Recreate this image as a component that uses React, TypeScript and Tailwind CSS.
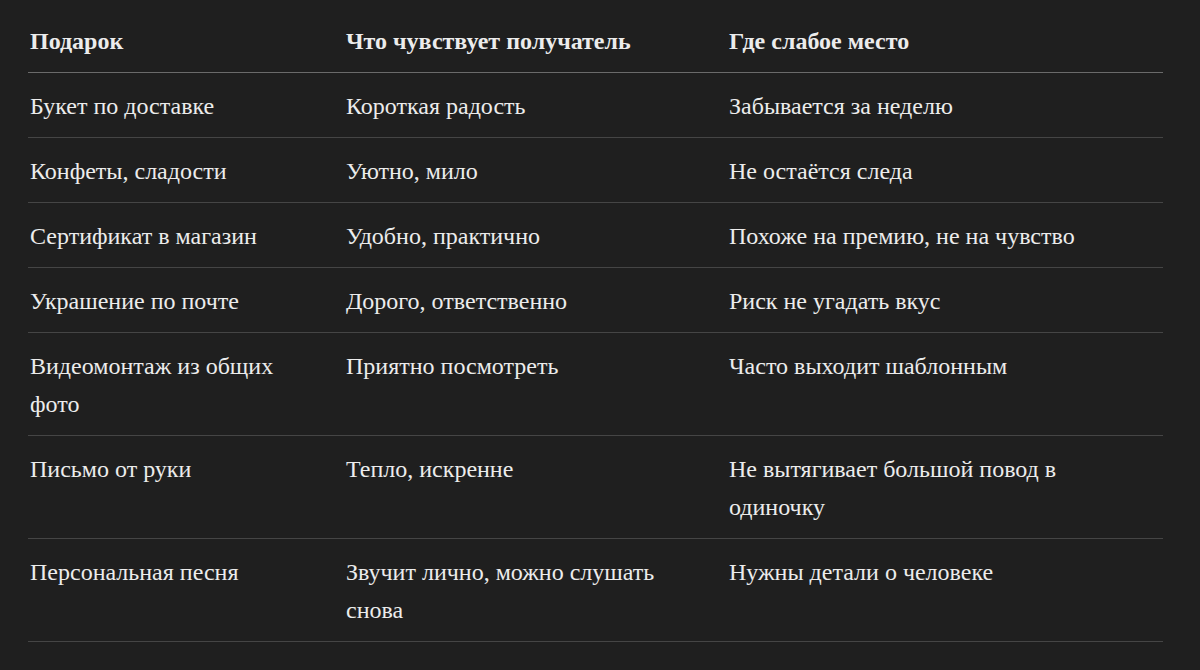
const rows: [string, string, string][] = [
  ["Букет по доставке", "Короткая радость", "Забывается за неделю"],
  ["Конфеты, сладости", "Уютно, мило", "Не остаётся следа"],
  ["Сертификат в магазин", "Удобно, практично", "Похоже на премию, не на чувство"],
  ["Украшение по почте", "Дорого, ответственно", "Риск не угадать вкус"],
  ["Видеомонтаж из общих фото", "Приятно посмотреть", "Часто выходит шаблонным"],
  ["Письмо от руки", "Тепло, искренне", "Не вытягивает большой повод в одиночку"],
  ["Персональная песня", "Звучит лично, можно слушать снова", "Нужны детали о человеке"],
];

export default function App() {
  return (
    <div className="min-h-screen w-full bg-[#1f1f1f] text-[#ececec] font-['Liberation_Serif',serif]">
      <div className="pl-[28px] pr-[37px] pt-[8px]">
        <table className="w-full table-fixed border-collapse text-[24px] leading-[38px]">
          <colgroup>
            <col className="w-[316px]" />
            <col className="w-[383px]" />
            <col />
          </colgroup>
          <thead>
            <tr className="border-b border-[#6a6a6a]">
              <th className="text-left font-bold pt-[14px] pb-[12px] pl-[2px] pr-10 align-top">Подарок</th>
              <th className="text-left font-bold pt-[14px] pb-[12px] pl-[2px] pr-10 align-top">Что чувствует получатель</th>
              <th className="text-left font-bold pt-[14px] pb-[12px] pl-[2px] pr-10 align-top">Где слабое место</th>
            </tr>
          </thead>
          <tbody>
            {rows.map((r) => (
              <tr key={r[0]} className="border-b border-[#454545]">
                {r.map((c, i) => (
                  <td key={i} className="pt-[14px] pb-[12px] pl-[2px] pr-10 align-top">
                    {c}
                  </td>
                ))}
              </tr>
            ))}
          </tbody>
        </table>
      </div>
    </div>
  );
}
